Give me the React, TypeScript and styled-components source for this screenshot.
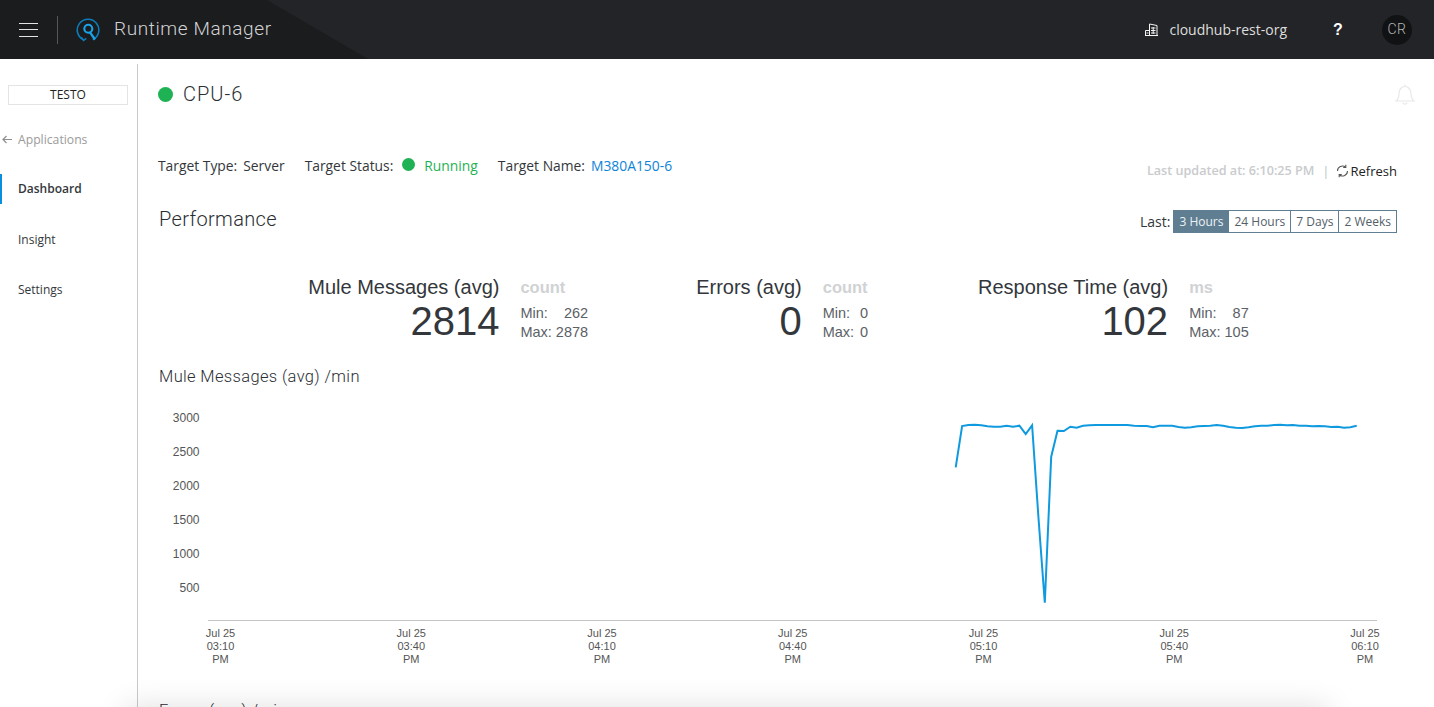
import styled, { createGlobalStyle } from 'styled-components'

const COLOR = {
  text: '#33373b',
  muted: '#9b9b9b',
  faint: '#c9cbcd',
  blue: '#0a8fdc',
  link: '#0c84d8',
  green: '#1fb254',
  slate: '#5f7e92',
}

const LINE_Y = [
  172, 48, 45, 44, 46, 49, 50, 50, 47, 50, 47, 72, 46, 320, 578, 140, 62, 63, 50, 53,
  47, 46, 45, 45, 45, 45, 45, 45, 47, 48, 48, 52, 47, 47, 47, 51, 53, 52, 49, 48,
  47, 45, 47, 51, 53, 54, 52, 49, 47, 47, 45, 44, 46, 45, 47, 47, 49, 48, 49, 51, 50, 53, 52, 47,
]

const LINE_POINTS = LINE_Y.map((y, i) => `${(955.7 + i * 6.365).toFixed(1)},${(410 + y / 3).toFixed(1)}`).join(' ')
const Y_TICKS = [3000, 2500, 2000, 1500, 1000, 500]
const X_TICKS = ['03:10', '03:40', '04:10', '04:40', '05:10', '05:40', '06:10']

const GlobalStyle = createGlobalStyle`
  html, body {
    margin: 0;
    height: 100%;
    overflow: hidden;
    background: #fff;
  }
  body {
    font-family: 'Open Sans', sans-serif;
    color: ${COLOR.text};
  }
`

const Page = styled.div`
  height: 707px;
  overflow: hidden;
  position: relative;
  display: flex;
  flex-direction: column;
`

const Header = styled.header`
  position: relative;
  flex: none;
  height: 59px;
  display: flex;
  align-items: center;
  justify-content: space-between;
  background: #232427;
  overflow: hidden;

  &::before {
    content: '';
    position: absolute;
    inset: 0;
    background: #1b1c1e;
    clip-path: polygon(0 0, 267px 0, 368px 59px, 0 59px);
  }
`

const HeaderSide = styled.div`
  position: relative;
  display: flex;
  align-items: center;
`

const Burger = styled.div`
  width: 19px;
  margin-left: 19px;
  height: 14px;
  display: flex;
  flex-direction: column;
  justify-content: space-between;

  span {
    display: block;
    height: 1px;
    background: #e4e4e4;
  }
`

const HeaderDivider = styled.div`
  width: 1px;
  height: 28px;
  margin: 0 18px 0 19px;
  background: #55575a;
`

const AppTitle = styled.div`
  margin-left: 14px;
  margin-top: -3px;
  font-family: Roboto, sans-serif;
  font-weight: 300;
  font-size: 19px;
  letter-spacing: 0.6px;
  color: #d2d3d4;
`

const OrgName = styled.div`
  margin-left: 11px;
  font-size: 14px;
  color: #dedede;
`

const Help = styled.div`
  margin-left: 46px;
  width: 12px;
  font-family: 'Liberation Sans', sans-serif;
  font-weight: 700;
  font-size: 16px;
  color: #fff;
`

const Avatar = styled.div`
  margin: 0 22px 0 37px;
  width: 30px;
  height: 30px;
  border-radius: 50%;
  background: #111214;
  display: flex;
  align-items: center;
  justify-content: center;
  font-family: Roboto, sans-serif;
  font-size: 14px;
  font-weight: 300;
  letter-spacing: 0.5px;
  color: #b5b5b5;
  padding-bottom: 2px;
  box-sizing: border-box;
`

const Body = styled.div`
  flex: 1;
  display: flex;
  min-height: 0;
`

const Sidebar = styled.nav`
  flex: none;
  width: 137px;
  margin-top: 5px;
  padding-top: 21px;
  border-right: 1px solid #c9c9c9;
`

const EnvBox = styled.div`
  margin-left: 8px;
  width: 118px;
  height: 18px;
  border: 1px solid #e4e4e4;
  text-align: center;
  font-size: 12px;
  line-height: 18px;
  color: #222;
`

const BackLink = styled.div`
  margin-top: 25px;
  display: flex;
  align-items: center;
  gap: 6px;
  padding-left: 2px;
  height: 18px;
  font-size: 12.2px;
  color: ${COLOR.muted};
`

const NavItem = styled.div<{ $active?: boolean }>`
  margin-top: ${p => (p.$active ? '26px' : '20.5px')};
  height: 30px;
  line-height: 30px;
  padding-left: ${p => (p.$active ? '16px' : '18px')};
  border-left: ${p => (p.$active ? `2px solid ${COLOR.blue}` : 'none')};
  font-size: 12px;
  font-weight: ${p => (p.$active ? 600 : 400)};
  color: #33373b;
`

const Main = styled.main`
  flex: 1;
  min-width: 0;
  padding: 0 37px 0 20px;
`

const TitleRow = styled.div`
  height: 70px;
  display: flex;
  align-items: center;
  justify-content: space-between;
`

const TitleLeft = styled.div`
  display: flex;
  align-items: center;
  gap: 10px;
`

const Dot = styled.span<{ $size: number }>`
  flex: none;
  width: ${p => p.$size}px;
  height: ${p => p.$size}px;
  border-radius: 50%;
  background: ${COLOR.green};
`

const StatusDot = styled(Dot)`
  margin: 0 3px 4px 3px;
`

const ServerName = styled.h1`
  margin: 0;
  font-family: Roboto, sans-serif;
  font-weight: 300;
  font-size: 20px;
  letter-spacing: 1px;
  color: #2a2e33;
`

const BellWrap = styled.div`
  margin-right: -18px;
  display: flex;
`

const InfoRow = styled.div`
  height: 53px;
  margin-top: 19px;
  display: flex;
  justify-content: space-between;
  align-items: flex-start;
`

const TargetList = styled.div`
  display: flex;
  gap: 20px;
  padding-top: 4px;
  font-size: 13.85px;
  line-height: 28px;
`

const Target = styled.span`
  display: flex;
  gap: 6px;
  align-items: center;
`

const TargetValue = styled.span<{ $color?: string }>`
  color: ${p => p.$color || 'inherit'};
`

const Updated = styled.div`
  display: flex;
  align-items: center;
  padding-top: 10px;
  height: 25px;
  font-size: 13px;
  color: #222;
`

const UpdatedText = styled.span`
  font-size: 12.6px;
  color: ${COLOR.faint};
  font-weight: 600;
`

const Pipe = styled.span`
  margin: 0 6px 0 8px;
  color: #b9c4cc;
`

const RefreshWrap = styled.span`
  display: flex;
  margin-right: 2px;
`

const PerfRow = styled.div`
  height: 35px;
  display: flex;
  align-items: center;
  justify-content: space-between;
`

const SectionTitle = styled.h2`
  margin: 0 0 0 1px;
  font-family: Roboto, sans-serif;
  font-weight: 300;
  font-size: 20px;
  letter-spacing: 0.35px;
  color: #2a2e33;
`

const RangeRow = styled.div`
  display: flex;
  align-items: center;
  gap: 3px;
  font-size: 14px;
  margin-top: 5px;
`

const RangeGroup = styled.div`
  display: flex;
  height: 23px;
  box-sizing: border-box;
  border: 1px solid ${COLOR.slate};
`

const RangeButton = styled.div<{ $active?: boolean }>`
  padding: 0 5px;
  font-size: 12px;
  line-height: 21px;
  background: ${p => (p.$active ? COLOR.slate : '#fff')};
  color: ${p => (p.$active ? '#eef2f4' : '#53606a')};
  & + & {
    border-left: 1px solid ${COLOR.slate};
  }
`

const Metrics = styled.div`
  margin-top: 39px;
  height: 90px;
  padding-left: 2px;
  display: flex;
  justify-content: center;
  gap: 108px;
  font-family: 'Liberation Sans', Arial, sans-serif;
`

const Metric = styled.div`
  display: flex;
  gap: 21px;
`

const MetricLeft = styled.div<{ $minWidth?: number }>`
  min-width: ${p => p.$minWidth || 0}px;
  display: flex;
  flex-direction: column;
  align-items: flex-end;
`

const MetricName = styled.div`
  font-size: 20px;
  line-height: 24px;
  color: #33373b;
`

const MetricValue = styled.div`
  font-size: 40px;
  line-height: 46px;
  margin-top: -1px;
  color: #33373b;
`

const MetricRight = styled.div`
  display: flex;
  flex-direction: column;
`

const MetricUnit = styled.div`
  font-size: 16.5px;
  line-height: 24px;
  font-weight: 700;
  color: #d0d2d4;
`

const MinMax = styled.div`
  display: grid;
  grid-template-columns: auto minmax(10px, auto);
  column-gap: 4px;
  justify-content: start;
  margin-top: 5px;
  font-size: 14.5px;
  line-height: 19px;
  color: #5c6166;

  b {
    font-weight: 400;
    text-align: right;
  }
`

const ChartTitle = styled.h3`
  margin: 0 0 0 1px;
  font-family: Roboto, sans-serif;
  font-weight: 300;
  font-size: 16.5px;
  letter-spacing: 0.35px;
  color: #2a2e33;
  line-height: 24px;
`

const ChartSvg = styled.svg`
  display: block;
  margin-top: 11px;
  width: 1239px;
  height: 288px;

  text {
    font-family: 'Liberation Sans', Arial, sans-serif;
    font-size: 11px;
    fill: #555;
  }
`

const YTick = styled.text`
  && {
    font-size: 12px;
  }
`

const NextChartTitle = styled(ChartTitle)`
  margin-top: 11px;
`

const BottomBar = styled.div`
  position: absolute;
  left: 125px;
  right: 105px;
  bottom: -30px;
  height: 30px;
  box-shadow: 0 0 30px rgba(0, 0, 0, 0.13);
`

function Logo() {
  return (
    <svg width="24" height="24" viewBox="0 0 24 24" fill="none">
      <path d="M7.500 21.800A10.800 10.800 0 1 1 16.800 21.700" stroke="#0d7cba" strokeWidth="1.6" />
      <path d="M5.300 19.200l2.300 3.200 2.700-2" stroke="#0d7cba" strokeWidth="1.4" />
      <circle cx="12.300" cy="10.800" r="4" stroke="#1aa3e8" strokeWidth="2.100" />
      <path d="M14 14.300l5 7.200" stroke="#1aa3e8" strokeWidth="2.300" />
    </svg>
  )
}

function BuildingIcon() {
  return (
    <svg width="13" height="13" viewBox="0 0 13 13" fill="none" stroke="#f4f4f4" strokeWidth="1">
      <path d="M0 12.500h13M4.500 12.500V1l7.500 1.500V12.500M0.500 12.500V7.500h4" />
      <path d="M6 5h4.500M6 7.500h4.500M6 10h4.500M8.200 4v7" />
      <path d="M1.500 10h2" />
    </svg>
  )
}

function BellIcon() {
  return (
    <svg width="20" height="21" viewBox="0 0 20 21" fill="none" stroke="#e8e8e8" strokeWidth="1.2">
      <path d="M1 17c2-1.500 3-3.500 3-7.500C4 5.500 6.500 2.500 10 2.500s6 3 6 7c0 4 1 6 3 7.500z" />
      <path d="M10 .6v2M7.800 18.500c.4 1 1.200 1.600 2.200 1.600s1.800-.6 2.200-1.600" />
    </svg>
  )
}

function RefreshIcon() {
  return (
    <svg width="13" height="14" viewBox="0 0 13 14" fill="none" stroke="#555" strokeWidth="1.1">
      <path d="M11.500 7a5 5 0 0 1-8 4M1.500 7a5 5 0 0 1 8-4" />
      <path d="M9.800.8v2.700H7.200M3.200 13.200v-2.700h2.600" />
    </svg>
  )
}

function BackArrow() {
  return (
    <svg width="10" height="9" viewBox="0 0 10 9" fill="none" stroke="#8f8f8f" strokeWidth="1.2">
      <path d="M10 4.500H1M4.500 1 1 4.500 4.500 8" />
    </svg>
  )
}

function MessagesChart() {
  return (
    <ChartSvg viewBox="158 400 1239 288">
      {Y_TICKS.map((tick, i) => (
        <YTick key={tick} x="199.500" y={421.500 + i * 34} textAnchor="end">
          {tick}
        </YTick>
      ))}
      <line x1="208" y1="620.500" x2="1377" y2="620.500" stroke="#c4c4c4" />
      {X_TICKS.map((tick, i) => {
        const x = 220.500 + i * 190.750
        return (
          <g key={tick} textAnchor="middle">
            <text x={x} y="637">Jul 25</text>
            <text x={x} y="650">{tick}</text>
            <text x={x} y="663">PM</text>
          </g>
        )
      })}
      <polyline points={LINE_POINTS} fill="none" stroke="#0f9ae0" strokeWidth="2" />
    </ChartSvg>
  )
}

export default function App() {
  return (
    <Page>
      <GlobalStyle />
      <Header>
        <HeaderSide>
          <Burger>
            <span />
            <span />
            <span />
          </Burger>
          <HeaderDivider />
          <Logo />
          <AppTitle>Runtime Manager</AppTitle>
        </HeaderSide>
        <HeaderSide>
          <BuildingIcon />
          <OrgName>cloudhub-rest-org</OrgName>
          <Help>?</Help>
          <Avatar>CR</Avatar>
        </HeaderSide>
      </Header>
      <Body>
        <Sidebar>
          <EnvBox>TESTO</EnvBox>
          <BackLink>
            <BackArrow />
            Applications
          </BackLink>
          <NavItem $active>Dashboard</NavItem>
          <NavItem>Insight</NavItem>
          <NavItem>Settings</NavItem>
        </Sidebar>
        <Main>
          <TitleRow>
            <TitleLeft>
              <Dot $size={15} />
              <ServerName>CPU-6</ServerName>
            </TitleLeft>
            <BellWrap>
              <BellIcon />
            </BellWrap>
          </TitleRow>
          <InfoRow>
            <TargetList>
              <Target>Target Type: <TargetValue>Server</TargetValue></Target>
              <Target>
                Target Status: <StatusDot $size={13} /> <TargetValue $color={COLOR.green}>Running</TargetValue>
              </Target>
              <Target>Target Name: <TargetValue $color={COLOR.link}>M380A150-6</TargetValue></Target>
            </TargetList>
            <Updated>
              <UpdatedText>Last updated at: 6:10:25 PM</UpdatedText>
              <Pipe>|</Pipe>
              <RefreshWrap>
                <RefreshIcon />
              </RefreshWrap>
              Refresh
            </Updated>
          </InfoRow>
          <PerfRow>
            <SectionTitle>Performance</SectionTitle>
            <RangeRow>
              Last:
              <RangeGroup>
                <RangeButton $active>3 Hours</RangeButton>
                <RangeButton>24 Hours</RangeButton>
                <RangeButton>7 Days</RangeButton>
                <RangeButton>2 Weeks</RangeButton>
              </RangeGroup>
            </RangeRow>
          </PerfRow>
          <Metrics>
            <Metric>
              <MetricLeft>
                <MetricName>Mule Messages (avg)</MetricName>
                <MetricValue>2814</MetricValue>
              </MetricLeft>
              <MetricRight>
                <MetricUnit>count</MetricUnit>
                <MinMax><span>Min:</span><b>262</b><span>Max:</span><b>2878</b></MinMax>
              </MetricRight>
            </Metric>
            <Metric>
              <MetricLeft>
                <MetricName>Errors (avg)</MetricName>
                <MetricValue>0</MetricValue>
              </MetricLeft>
              <MetricRight>
                <MetricUnit>count</MetricUnit>
                <MinMax><span>Min:</span><b>0</b><span>Max:</span><b>0</b></MinMax>
              </MetricRight>
            </Metric>
            <Metric>
              <MetricLeft $minWidth={192}>
                <MetricName>Response Time (avg)</MetricName>
                <MetricValue>102</MetricValue>
              </MetricLeft>
              <MetricRight>
                <MetricUnit>ms</MetricUnit>
                <MinMax><span>Min:</span><b>87</b><span>Max:</span><b>105</b></MinMax>
              </MetricRight>
            </Metric>
          </Metrics>
          <ChartTitle>Mule Messages (avg) /min</ChartTitle>
          <MessagesChart />
          <NextChartTitle>Errors (avg) /min</NextChartTitle>
        </Main>
      </Body>
      <BottomBar />
    </Page>
  )
}
